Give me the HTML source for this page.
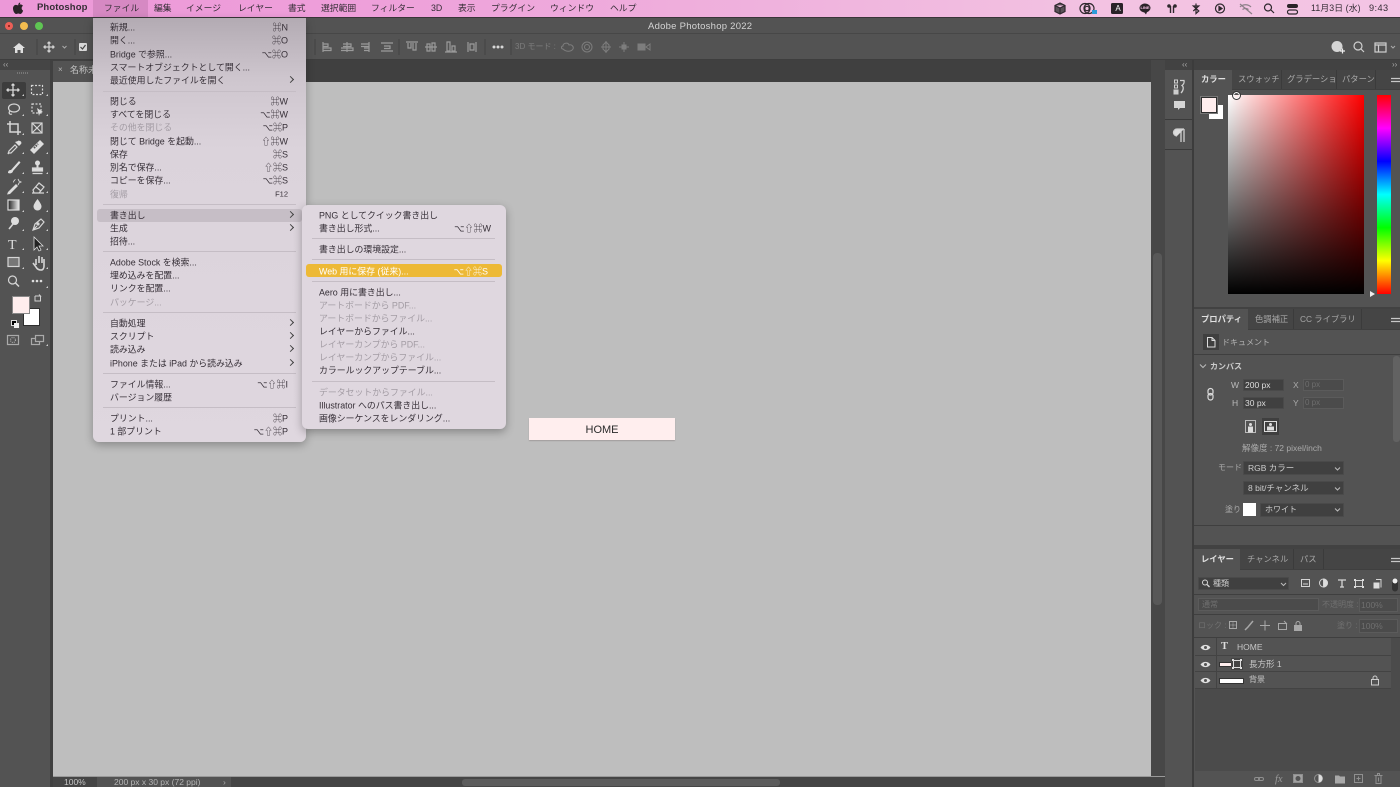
<!DOCTYPE html>
<html lang="ja"><head><meta charset="utf-8"><title>Adobe Photoshop 2022</title>
<style>
*{box-sizing:border-box}
html{margin:0;padding:0;width:1400px;height:787px;overflow:hidden;background:#535353}
body{margin:0;padding:0;width:1400px;height:787px;overflow:hidden;background:#535353;font-family:"Liberation Sans","Noto Sans CJK JP",sans-serif;position:relative;filter:blur(.3px)}
.a{position:absolute}
.t{position:absolute;white-space:nowrap;font-size:9px;line-height:12px;color:#c4c4c4}
.m{position:absolute;white-space:nowrap;font-size:8.800px;line-height:14px;color:#352e36;top:0}
.mb{position:absolute;white-space:nowrap;font-size:8.900px;line-height:12px;color:#362f37;transform:translateY(-5.500px)}
.d{color:#a39ca4}
.s{position:absolute;white-space:nowrap;font-size:9px;line-height:12px;color:#362f37;transform:translateY(-5.500px);text-align:right}
.k{right:18px}
.ar{position:absolute;left:195px;width:5px;height:5px;border-top:1px solid #444;border-right:1px solid #444;transform:translateY(-3px) rotate(45deg)}
.sep{position:absolute;height:1px;background:#c5bdc5}
.sel{position:absolute;background:#404040;border:1px solid #4a4a4a;border-radius:1px}
.dis{position:absolute;background:#4b4b4b;border:1px solid #5b5b5b}
.line{position:absolute;background:#3f3f3f;height:1px}
svg{position:absolute;overflow:visible}
</style></head><body>

<!-- menu bar -->
<div class="a" style="left:0;top:0;width:1400px;height:18px;background:linear-gradient(90deg,#ec98d8 0%,#ee9fda 25%,#efb2dd 55%,#f3c3e2 80%,#f3c4e4 100%);border-bottom:1px solid #3a3539"></div>
<div class="a" style="left:93px;top:0;width:55px;height:17px;background:#d689c3"></div>
<svg style="left:12px;top:2px" width="12" height="13" viewBox="0 0 12 13"><path d="M8.2 0.5C7.2.7 6.2 1.6 6.3 3c1.1 0 2-1.2 1.9-2.5zM6.2 3.4c-.7 0-1.3-.5-2.2-.5C2.4 2.9 1 4.200 1 6.500c0 2.500 1.700 5.500 3.200 5.500.8 0 1.200-.5 2.100-.5s1.200.5 2 .5c1.300 0 2.500-2.200 2.800-3.400-1.800-.8-2-3.800-.1-4.700-.6-1-1.700-1.500-2.600-1.500-.9 0-1.500.5-2.200.5z" fill="#2a2228"/></svg>
<span class="m" style="left:37px;top:1px;font-weight:700;font-size:9.500px;letter-spacing:.1px">Photoshop</span>
<span class="m" style="left:104px;top:1px">ファイル</span>
<span class="m" style="left:154px;top:1px">編集</span>
<span class="m" style="left:186px;top:1px">イメージ</span>
<span class="m" style="left:238px;top:1px">レイヤー</span>
<span class="m" style="left:288px;top:1px">書式</span>
<span class="m" style="left:321px;top:1px">選択範囲</span>
<span class="m" style="left:371px;top:1px">フィルター</span>
<span class="m" style="left:431px;top:1px">3D</span>
<span class="m" style="left:458px;top:1px">表示</span>
<span class="m" style="left:491px;top:1px">プラグイン</span>
<span class="m" style="left:550px;top:1px">ウィンドウ</span>
<span class="m" style="left:610px;top:1px">ヘルプ</span>
<span class="m" style="left:1311px;top:1px;letter-spacing:.1px">11月3日 (水)</span>
<span class="m" style="left:1369px;top:1px;letter-spacing:.4px;font-size:9.200px">9:43</span>
<svg style="left:1050px;top:0" width="300" height="18" fill="none" stroke="#2e282d" stroke-width="1.200">
<path d="M10 3l5 2.500v6l-5 2.500-5-2.500v-6zM5 5.500l5 2.500 5-2.500M10 8v6" fill="#5a5258"/>
<circle cx="35" cy="8.500" r="5"/><circle cx="39" cy="8.500" r="5"/><circle cx="37" cy="8.500" r="2.200"/>
<rect x="42" y="10" width="5" height="4" fill="#2c9ad8" stroke="none"/>
<rect x="61" y="3" width="12" height="11" rx="1.500" fill="#2a2228" stroke="none"/>
<ellipse cx="95" cy="8" rx="5.500" ry="4.500" fill="#2a2228" stroke="none"/><path d="M94 12l2 2.500 1-2.500" fill="#2a2228" stroke="none"/>
<circle cx="119" cy="6" r="1.800" fill="#2e282d" stroke="none"/><circle cx="125" cy="6" r="1.800" fill="#2e282d" stroke="none"/><path d="M120.500 6v7M123.500 6v7" stroke-width="1.400"/>
<path d="M146 3.500v10l2.800-2.500-5.500-5 5.500-.0-5.500 5" transform="translate(0 .0)"/>
<circle cx="170" cy="8.500" r="4.500"/><path d="M169 6.500l3 2-3 2z" fill="#2e282d"/>
<path d="M190 7c3-3 8-3 11 0M192.500 9.500c2-1.500 4-1.500 6 0M190 4l12 10" stroke="#8c7f88"/>
<circle cx="218" cy="7.500" r="3.500"/><path d="M221 10l3 3"/>
<rect x="237" y="4" width="11" height="4" rx="2" fill="#2a2228" stroke="none"/><rect x="237.500" y="10" width="10" height="4" rx="2"/>
</svg>
<span class="a" style="left:1113px;top:3px;font-size:8px;line-height:11px;color:#fff;width:10px;text-align:center">A</span>
<span class="a" style="left:1139px;top:5px;font-size:4px;line-height:6px;color:#f3c0e2;width:12px;text-align:center;font-weight:700">LINE</span>

<!-- title bar -->
<div class="a" style="left:0;top:18px;width:1400px;height:16px;background:#535353;border-bottom:1px solid #474747"></div>
<div class="a" style="left:5px;top:22px;width:8px;height:8px;border-radius:50%;background:#ec5f57"></div>
<div class="a" style="left:8px;top:25px;width:2px;height:2px;border-radius:50%;background:#7f1a14"></div>
<div class="a" style="left:20px;top:22px;width:8px;height:8px;border-radius:50%;background:#f4bd4f"></div>
<div class="a" style="left:35px;top:22px;width:8px;height:8px;border-radius:50%;background:#5fc553"></div>
<span class="t" style="left:648px;top:21px;font-size:9.500px;color:#d4d4d4;letter-spacing:.25px">Adobe Photoshop 2022</span>

<!-- options bar -->
<div class="a" style="left:0;top:34px;width:1400px;height:26px;background:#535353;border-bottom:1px solid #3e3e3e"></div>
<svg style="left:0;top:34px" width="700" height="26" fill="none" stroke="#d0d0d0" stroke-width="1">
<path d="M13 14l6-5 6 5h-2v5h-2.500v-3h-3v3H15v-5z" fill="#e0e0e0" stroke="none"/>
<path d="M37 5v16M75 5v16" stroke="#434343"/>
<path d="M49 8v10M44 13h10M47.500 9.500L49 8l1.500 1.500M47.500 16.500L49 18l1.500-1.500M45.500 11.500L44 13l1.500 1.500M52.500 11.500L54 13l-1.500 1.500" stroke-width="1.300"/>
<path d="M62.500 12l2 2 2-2" stroke="#aaa"/>
<rect x="79" y="9" width="8" height="8" rx="1" fill="#d8d8d8" stroke="none"/><path d="M80.500 13l2 2 3-4" stroke="#444" stroke-width="1.200"/>
<path d="M315 5v16M399 5v16M485 5v16M511 5v16" stroke="#434343"/>
<g stroke="#9a9a9a" stroke-width="1.200">
<path d="M323 8v10M323 10h5v2.500h-5M323 14h8v2.500h-8" />
<path d="M347 8v10M343 10h8v2.500h-8M341 14h12v2.500h-12"/>
<path d="M369 8v10M361 10h8v2.500h-8M364 14h5v2.500h-5"/>
<path d="M381 9h12M381 17h12M384 12h6v2.500h-6"/>
<path d="M406 8h12M408 9v5h3v-5M413 9v7h3v-7"/>
<path d="M425 13h12M427 10h3v7h-3zM432 9h3v8h-3z"/>
<path d="M445 18h12M447 8h3v9h-3zM452 12h3v5h-3z"/>
<path d="M468 8v10M476 8v10M470 10h4v6h-4z"/>
</g>
<g fill="#d8d8d8" stroke="none"><circle cx="494" cy="13" r="1.500"/><circle cx="498" cy="13" r="1.500"/><circle cx="502" cy="13" r="1.500"/></g>
<g stroke="#7d7d7d">
<path d="M563 15c-2 0-2-3 0-3 0-3 5-4 6-1 3-1 5 2 4 4-2 3-7 3-10 0z"/>
<circle cx="587" cy="13" r="5"/><circle cx="587" cy="13" r="2.500"/>
<path d="M606 8l3 3v4l-3 3-3-3v-4zM601 13h10M606 7v12"/>
<path d="M624 8v10M619 13h10"/><rect x="622" y="11" width="4" height="4" fill="#7d7d7d"/>
<rect x="638" y="10" width="7" height="6" fill="#7d7d7d"/><path d="M646 13l4-3v6z"/>
</g>
</svg>
<span class="t" style="left:515px;top:41px;font-size:8px;color:#7d7d7d">3D モード :</span>
<svg style="left:1325px;top:34px" width="75" height="26" fill="none" stroke="#cfcfcf" stroke-width="1.200">
<circle cx="12" cy="12.500" r="5.500" fill="#d5d5d5" stroke="none"/><path d="M15 17h5M17.500 14.500v5" stroke="#eee"/>
<circle cx="33" cy="12" r="4"/><path d="M36 15l3 3"/>
<rect x="50" y="9" width="11" height="9"/><path d="M50 11h11M53.500 11v7" />
<path d="M66 12l2 2 2-2" stroke="#aaa" stroke-width="1"/>
</svg>

<!-- tab bar + canvas -->
<div class="a" style="left:53px;top:60px;width:1098px;height:22px;background:#404040"></div>
<div class="a" style="left:53px;top:61px;width:42px;height:21px;background:#535353"></div>
<span class="t" style="left:58px;top:64px;color:#b5b5b5;font-size:8px">×</span>
<span class="t" style="left:70px;top:64px">名称未設定</span>
<div class="a" style="left:53px;top:82px;width:1098px;height:694px;background:#bebebe"></div>
<div class="a" style="left:529px;top:418px;width:146px;height:22px;background:#ffeeee;box-shadow:0 1px 1px #a19c9c"></div>
<span class="a" style="left:529px;top:422px;width:146px;text-align:center;font-size:11px;line-height:16px;color:#2a2a2a">HOME</span>

<!-- left toolbar -->
<div class="a" style="left:0;top:60px;width:51px;height:727px;background:#535353"></div>
<div class="a" style="left:50px;top:60px;width:3px;height:727px;background:#404040"></div>
<div class="a" style="left:0;top:60px;width:50px;height:10px;background:#454545"></div>
<span class="t" style="left:3px;top:59px;font-size:8px;color:#aaa">‹‹</span>
<div class="a" style="left:2px;top:82px;width:24px;height:17px;background:#3d3d3d;border-radius:2px"></div>
<svg style="left:0;top:60px" width="50" height="300" fill="none" stroke="#d6d6d6" stroke-width="1.200">
<path d="M17 13h11" stroke="#777" stroke-dasharray="1 1" stroke-width="2"/>
<!-- tick marks -->
<path d="M22 36h2v-2zM46 36h2v-2zM22 56h2v-2zM46 56h2v-2zM22 75h2v-2zM22 94h2v-2zM46 94h2v-2zM22 114h2v-2zM46 114h2v-2zM22 133h2v-2zM46 133h2v-2zM22 152h2v-2zM46 152h2v-2zM22 171h2v-2zM46 171h2v-2zM22 190h2v-2zM46 190h2v-2zM22 209h2v-2zM46 209h2v-2zM46 228h2v-2zM46 286h2v-2z" fill="#cfcfcf" stroke="none"/>
<!-- row 1 y=30 -->
<g transform="translate(13 30)"><path d="M0-6V6M-6 0H6M-1.500-4.500L0-6l1.500 1.500M-1.500 4.500L0 6l1.500-1.500M-4.500-1.500L-6 0l1.500 1.500M4.500-1.500L6 0 4.500 1.500" stroke-width="1.300"/></g>
<g transform="translate(37 30)"><rect x="-5.500" y="-4.500" width="11" height="9" stroke-dasharray="2 1.500"/></g>
<!-- row 2 y=49 -->
<g transform="translate(14 49)"><ellipse cx="0" cy="-1" rx="5.500" ry="4"/><path d="M-4 2c-2 2 0 4 2 3"/></g>
<g transform="translate(37 49)"><rect x="-5" y="-5" width="9" height="9" stroke-dasharray="2 1.500"/><path d="M0-1l6 4-3 1-1 3z" fill="#ddd" stroke="none"/></g>
<!-- row 3 y=68 -->
<g transform="translate(13 68)"><path d="M-3-7V4H8M-6-4H5V7" stroke-width="1.500"/></g>
<g transform="translate(37 68)"><rect x="-5" y="-5" width="10" height="10"/><path d="M-5-5L5 5M5-5L-5 5"/></g>
<!-- row 4 y=87 -->
<g transform="translate(14 87)"><path d="M-5 6l-1 1 1-3 6-6 2 2-6 6z" stroke-width="1.200"/><path d="M1-5l4 4 2-2c1-1 0-3-1-3s-1-1-2 0z" fill="#ddd" stroke="none"/></g>
<g transform="translate(37 87)"><path d="M-7 3L3-7l4 4L-3 7z" fill="#ddd" stroke="none"/><path d="M-3 1l4-4" stroke="#535353" stroke-width="2" stroke-dasharray="1.500 1"/></g>
<!-- row 5 y=107 -->
<g transform="translate(14 107)"><path d="M-6 6c0-2 1-3 3-3L5-6l1.500 1.500L-1 4c0 2-3 3-5 2z" fill="#ddd" stroke="none"/></g>
<g transform="translate(37.500 107)"><circle cx="0" cy="-4" r="2.500" fill="#ddd" stroke="none"/><path d="M-1-2h2v3h-2z" fill="#ddd" stroke="none"/><path d="M-5 1h10v3H-5zM-5 6.500H5" fill="#ddd"/></g>
<!-- row 6 y=126 -->
<g transform="translate(14 126)"><path d="M-6 6l8-8 2 2-8 8-3 .5zM2-7c-2 .5-3 2-3 4M1-5h3" fill="#ddd" stroke="none"/><path d="M4-7l1 2 2 1-2 1-1 2" stroke-width=".9"/></g>
<g transform="translate(38 126)"><path d="M-5 4l6-7 5 4-5 6h-5zM-2 1l5 4M-6 7H6"/></g>
<!-- row 7 y=145 -->
<defs><linearGradient id="g1"><stop offset="0" stop-color="#222"/><stop offset="1" stop-color="#eee"/></linearGradient></defs>
<rect x="8" y="140" width="11" height="10" fill="url(#g1)" stroke="#ddd"/>
<path d="M37.500 139c3 4 4 6 4 7.500a4 4 0 0 1-8 0c0-1.500 1-3.500 4-7.500z" fill="#ddd" stroke="none"/>
<!-- row 8 y=164 -->
<circle cx="15" cy="161" r="4" fill="#ddd" stroke="none"/><path d="M13 164l-4 5" stroke-width="1.600"/>
<path d="M33 170l2-6 6-5 3 3-5 6zM33 170l4-4"/><circle cx="38" cy="164" r="1" fill="#ddd"/>
<!-- row 9 y=183 -->
<text x="8" y="189" font-family="Liberation Serif" font-size="14" fill="#dcdcdc" stroke="none">T</text>
<path d="M34 177l0 13 3-3 2 4 2-1-2-4h4z" fill="#222" stroke="#ddd" stroke-width=".8"/>
<!-- row 10 y=202 -->
<rect x="8" y="197.500" width="11" height="9" fill="#777"/>
<path d="M33 203l3 4c1 2 3 3 5 3s3-2 3-4v-7M36 199v6M39 196v7M42 197v6" stroke-width="1.600"/>
<!-- row 11 y=221 -->
<circle cx="12.500" cy="220" r="4"/><path d="M15.500 223l3.500 3.500" stroke-width="1.500"/>
<g fill="#ddd" stroke="none"><circle cx="33" cy="221" r="1.300"/><circle cx="37" cy="221" r="1.300"/><circle cx="41" cy="221" r="1.300"/></g>
<!-- swap -->
<path d="M35 236h5.500l-1.500-1.500M40.500 236v5.500M35 236v5h5.500" stroke="#d0d0d0" stroke-width="1" fill="none" transform="translate(0 0)"/>
<rect x="7.500" y="275.500" width="11" height="9" stroke="#aaa"/><circle cx="13" cy="280" r="2.500" stroke="#aaa" stroke-dasharray="1 1"/>
<rect x="31.500" y="278.500" width="8" height="6" stroke="#aaa"/><rect x="35.500" y="275.500" width="8" height="6" fill="#535353" stroke="#aaa"/>
</svg>
<div class="a" style="left:23px;top:308px;width:17px;height:18px;background:#fff;border:1px solid #2e2e2e"></div>
<div class="a" style="left:12px;top:296px;width:18px;height:18px;background:#ffeeee;border:1px solid #888"></div>
<div class="a" style="left:11px;top:320px;width:6px;height:6px;background:#000;border:1px solid #ddd"></div>
<div class="a" style="left:14px;top:323px;width:5px;height:5px;background:#eee"></div>

<!-- vertical scroll area -->
<div class="a" style="left:1151px;top:60px;width:14px;height:727px;background:#474747"></div>
<div class="a" style="left:1153px;top:253px;width:9px;height:352px;background:#585858;border-radius:4px"></div>
<!-- status bar -->
<div class="a" style="left:53px;top:776px;width:1112px;height:11px;background:#454545;border-top:1px solid #999"></div>
<div class="a" style="left:97px;top:777px;width:134px;height:10px;background:#535353"></div>
<div class="a" style="left:462px;top:779px;width:318px;height:7px;background:#5c5c5c;border-radius:3px"></div>
<span class="t" style="left:64px;top:777px;font-size:8.500px;line-height:11px">100%</span>
<span class="t" style="left:114px;top:777px;font-size:8.500px;line-height:11px;color:#b5b5b5">200 px x 30 px (72 ppi)</span>
<span class="t" style="left:223px;top:777px;font-size:8.500px;line-height:11px;color:#aaa">›</span>

<!-- dock -->
<div class="a" style="left:1165px;top:60px;width:235px;height:727px;background:#424242"></div>
<div class="a" style="left:1165px;top:70px;width:27px;height:717px;background:#535353"></div>
<div class="line" style="left:1165px;top:119px;width:27px;background:#3a3a3a"></div>
<div class="line" style="left:1165px;top:149px;width:27px;background:#3a3a3a"></div>
<div class="a" style="left:1192px;top:60px;width:2px;height:727px;background:#3c3c3c"></div>
<span class="t" style="left:1182px;top:59px;font-size:8px;color:#aaa">‹‹</span>
<span class="t" style="left:1392px;top:59px;font-size:8px;color:#aaa">››</span>
<svg style="left:1165px;top:70px" width="28" height="80" fill="none" stroke="#cfcfcf">
<rect x="9.500" y="10" width="3" height="3"/><rect x="9.500" y="15" width="3" height="3"/><rect x="9" y="20" width="4" height="4" fill="#ccc"/>
<path d="M15 10.500h4c.5 2-.5 4-2 5 2 1.500 1.500 5-1 7.500" stroke-width="1.300"/>
<path d="M9 31h11v7h-5l-2 2v-2H9z" fill="#d5d5d5" stroke="none"/>
<path d="M12 66a3.500 3.500 0 0 1 0-7h7M16 59v13M19 59v13" fill="#ddd" stroke-width="1.300" transform="translate(0 0)"/>
</svg>

<!-- color panel -->
<div class="a" style="left:1194px;top:70px;width:206px;height:237px;background:#535353"></div>
<div class="a" style="left:1232px;top:70px;width:168px;height:19px;background:#454545"></div>
<div class="line" style="left:1232px;top:89px;width:168px"></div>
<span class="t" style="left:1201px;top:73px;color:#e0e0e0;font-weight:700;font-size:8.300px">カラー</span>
<span class="t" style="left:1238px;top:73px;color:#a8a8a8;font-size:8.300px">スウォッチ</span>
<span class="a" style="left:1287px;top:73px;width:48px;overflow:hidden;white-space:nowrap;font-size:8.300px;line-height:12px;color:#a8a8a8">グラデーション</span>
<span class="t" style="left:1342px;top:73px;color:#a8a8a8;font-size:8.300px">パターン</span>
<div class="a" style="left:1281px;top:70px;width:1px;height:19px;background:#3b3b3b"></div>
<div class="a" style="left:1336px;top:70px;width:1px;height:19px;background:#3b3b3b"></div>
<div class="a" style="left:1375px;top:70px;width:1px;height:19px;background:#3b3b3b"></div>
<div class="a" style="left:1209px;top:105px;width:14px;height:14px;background:#fff"></div>
<div class="a" style="left:1201px;top:97px;width:16px;height:16px;background:#ffeeee;border:1px solid #2e2e2e;outline:1px solid #777"></div>
<div class="a" style="left:1228px;top:95px;width:136px;height:199px;background:linear-gradient(to top,#000,rgba(0,0,0,0)),linear-gradient(to right,#fff,#f00)"></div>
<div class="a" style="left:1232px;top:91px;width:9px;height:9px;border-radius:50%;border:1px solid #333;box-shadow:inset 0 0 0 1px #fff"></div>
<div class="a" style="left:1377px;top:95px;width:14px;height:199px;background:linear-gradient(to bottom,#f00 0%,#f0f 16.700%,#00f 33.300%,#0ff 50%,#0f0 66.700%,#ff0 83.300%,#f00 100%)"></div>
<div class="a" style="left:1370px;top:291px;width:0;height:0;border-left:5px solid #eee;border-top:3px solid transparent;border-bottom:3px solid transparent"></div>
<svg style="left:1390px;top:75px" width="10" height="10" stroke="#c8c8c8" stroke-width="1.200"><path d="M1 3.500h9M1 6.500h9"/></svg>

<!-- properties panel -->
<div class="a" style="left:1194px;top:309px;width:206px;height:236px;background:#535353"></div>
<div class="a" style="left:1248px;top:309px;width:152px;height:20px;background:#454545"></div>
<div class="line" style="left:1248px;top:329px;width:152px"></div>
<div class="a" style="left:1293px;top:309px;width:1px;height:20px;background:#3b3b3b"></div>
<div class="a" style="left:1361px;top:309px;width:1px;height:20px;background:#3b3b3b"></div>
<span class="t" style="left:1201px;top:313px;color:#e0e0e0;font-weight:700;font-size:8.300px">プロパティ</span>
<span class="t" style="left:1255px;top:313px;color:#a8a8a8;font-size:8.300px">色調補正</span>
<span class="t" style="left:1300px;top:313px;color:#a8a8a8;font-size:8.300px">CC ライブラリ</span>
<svg style="left:1390px;top:315px" width="10" height="10" stroke="#c8c8c8" stroke-width="1.200"><path d="M1 3.500h9M1 6.500h9"/></svg>
<div class="a" style="left:1203px;top:334px;width:16px;height:16px;background:#3f3f3f"></div>
<svg style="left:1203px;top:334px" width="16" height="16" fill="none" stroke="#ddd"><path d="M4.500 3.500h4.500l3 3v6.500h-7.500zM9 3.500v3h3"/></svg>
<span class="t" style="left:1222px;top:337px;font-size:8px;color:#b5b5b5">ドキュメント</span>
<div class="line" style="left:1194px;top:354px;width:206px"></div>
<svg style="left:1199px;top:363px" width="9" height="7" fill="none" stroke="#bbb"><path d="M1 1.500l3 3 3-3"/></svg>
<span class="t" style="left:1210px;top:361px;font-size:8px;font-weight:700;color:#ccc">カンバス</span>
<div class="a" style="left:1393px;top:356px;width:7px;height:86px;background:#626262;border-radius:3px"></div>
<span class="t" style="left:1231px;top:379px;font-size:8.500px;color:#bbb">W</span>
<div class="sel" style="left:1243px;top:379px;width:41px;height:12px"></div>
<span class="t" style="left:1245px;top:379px;font-size:8.500px;color:#ddd">200 px</span>
<span class="t" style="left:1293px;top:379px;font-size:8.500px;color:#aaa">X</span>
<div class="dis" style="left:1303px;top:379px;width:41px;height:12px"></div>
<span class="t" style="left:1305px;top:379px;font-size:8px;color:#6e6e6e">0 px</span>
<span class="t" style="left:1232px;top:397px;font-size:8.500px;color:#bbb">H</span>
<div class="sel" style="left:1243px;top:397px;width:41px;height:12px"></div>
<span class="t" style="left:1245px;top:397px;font-size:8.500px;color:#ddd">30 px</span>
<span class="t" style="left:1293px;top:397px;font-size:8.500px;color:#aaa">Y</span>
<div class="dis" style="left:1303px;top:397px;width:41px;height:12px"></div>
<span class="t" style="left:1305px;top:397px;font-size:8px;color:#6e6e6e">0 px</span>
<svg style="left:1207px;top:388px" width="8" height="13" fill="none" stroke="#ddd" stroke-width="1.200"><rect x="1" y=".5" width="5" height="6.500" rx="2.500"/><rect x="1" y="5.500" width="5" height="6.500" rx="2.500"/></svg>
<div class="a" style="left:1262px;top:418px;width:17px;height:17px;background:#3f3f3f"></div>
<svg style="left:1245px;top:420px" width="35" height="14"><rect x=".5" y=".5" width="10" height="12" fill="#535353" stroke="#bbb"/><circle cx="5.500" cy="4.500" r="1.500" fill="#ddd"/><rect x="3" y="6.500" width="5" height="6" fill="#ddd"/><rect x="19.500" y="1.500" width="12" height="10" fill="#3f3f3f" stroke="#ddd"/><circle cx="25.500" cy="4.500" r="1.500" fill="#ddd"/><rect x="22" y="6.500" width="7" height="4" fill="#ddd"/></svg>
<span class="t" style="left:1242px;top:442px;font-size:8.500px;color:#aaa">解像度 : 72 pixel/inch</span>
<span class="t" style="left:1218px;top:462px;font-size:8px;color:#aaa">モード</span>
<div class="sel" style="left:1243px;top:461px;width:101px;height:14px"></div>
<span class="t" style="left:1248px;top:462px;font-size:8.500px;color:#ccc">RGB カラー</span>
<div class="sel" style="left:1243px;top:481px;width:101px;height:14px"></div>
<span class="t" style="left:1248px;top:482px;font-size:8.500px;color:#ccc">8 bit/チャンネル</span>
<span class="t" style="left:1225px;top:504px;font-size:8px;color:#aaa">塗り</span>
<div class="a" style="left:1243px;top:503px;width:13px;height:13px;background:#fff"></div>
<div class="sel" style="left:1260px;top:503px;width:84px;height:14px"></div>
<span class="t" style="left:1265px;top:504px;font-size:8px;color:#ccc">ホワイト</span>
<svg style="left:1334px;top:465px" width="8" height="50" fill="none" stroke="#bbb"><path d="M1 2.500l2.500 2.500 2.500-2.500M1 22.500l2.500 2.500 2.500-2.500M1 43.500l2.500 2.500 2.500-2.500"/></svg>
<div class="line" style="left:1194px;top:525px;width:206px"></div>

<!-- layers panel -->
<div class="a" style="left:1194px;top:549px;width:206px;height:238px;background:#535353"></div>
<div class="a" style="left:1240px;top:549px;width:160px;height:20px;background:#454545"></div>
<div class="line" style="left:1240px;top:569px;width:160px"></div>
<div class="a" style="left:1293px;top:549px;width:1px;height:20px;background:#3b3b3b"></div>
<div class="a" style="left:1323px;top:549px;width:1px;height:20px;background:#3b3b3b"></div>
<span class="t" style="left:1201px;top:553px;color:#e0e0e0;font-weight:700;font-size:8.300px">レイヤー</span>
<span class="t" style="left:1247px;top:553px;color:#a8a8a8;font-size:8.300px">チャンネル</span>
<span class="t" style="left:1300px;top:553px;color:#a8a8a8;font-size:8.300px">パス</span>
<svg style="left:1390px;top:555px" width="10" height="10" stroke="#c8c8c8" stroke-width="1.200"><path d="M1 3.500h9M1 6.500h9"/></svg>
<div class="sel" style="left:1198px;top:577px;width:91px;height:13px"></div>
<span class="t" style="left:1213px;top:578px;font-size:8px;color:#ccc">種類</span>
<svg style="left:1200px;top:578px" width="195" height="14" fill="none" stroke="#d5d5d5">
<circle cx="5" cy="4.500" r="2.500"/><path d="M7 6.500l2.500 2.500" stroke-width="1.300"/>
<path d="M81 5l2.500 2.500 2.500-2.500" stroke="#bbb"/>
<rect x="101.500" y="1.500" width="8" height="7"/><path d="M103 6h5"/>
<circle cx="123.500" cy="5" r="4" /><path d="M123.500 1a4 4 0 0 1 0 8z" fill="#ddd"/>
<path d="M138 2h8M142 2v7M140 9h4" stroke-width="1.300"/>
<rect x="155.500" y="2.500" width="7" height="6"/><path d="M154 1h2v2h-2zM162 1h2v2h-2zM154 8h2v2h-2zM162 8h2v2h-2z" fill="#ddd" stroke="none"/>
<rect x="173.500" y="4.500" width="6" height="6" fill="#ddd" stroke="none"/><path d="M176 1.500h5v8"/>
<rect x="192.500" y="1" width="5" height="12" rx="2.500" stroke="#333" fill="#333"/><circle cx="195" cy="3" r="2.500" fill="#eee" stroke="none"/>
</svg>
<div class="line" style="left:1194px;top:594px;width:206px"></div>
<div class="dis" style="left:1198px;top:598px;width:121px;height:13px"></div>
<span class="t" style="left:1202px;top:599px;font-size:8px;color:#707070">通常</span>
<span class="t" style="left:1322px;top:599px;font-size:8px;color:#707070">不透明度 :</span>
<div class="dis" style="left:1359px;top:598px;width:39px;height:14px"></div>
<span class="t" style="left:1361px;top:599px;font-size:8.500px;color:#707070">100%</span>
<div class="line" style="left:1194px;top:614px;width:206px"></div>
<span class="t" style="left:1198px;top:620px;font-size:8px;color:#707070">ロック :</span>
<svg style="left:1228px;top:619px" width="80" height="14" fill="none" stroke="#a8a8a8">
<rect x="1.500" y="2.500" width="7" height="7"/><path d="M1.500 6h7M5 2.500v7" stroke-dasharray="1 1"/>
<path d="M17 11l3-3 5-6" stroke-width="1.500"/>
<path d="M37 1.500v10M32 6.500h10"/>
<rect x="50.500" y="4.500" width="8" height="6"/><path d="M56 2l3 3"/>
<rect x="66.500" y="6.500" width="7" height="5" fill="#a8a8a8"/><path d="M68 6.500v-2a2 2 0 0 1 4 0v2"/>
</svg>
<span class="t" style="left:1337px;top:620px;font-size:8px;color:#707070">塗り :</span>
<div class="dis" style="left:1359px;top:619px;width:39px;height:14px"></div>
<span class="t" style="left:1361px;top:620px;font-size:8.500px;color:#707070">100%</span>
<div class="line" style="left:1194px;top:637px;width:206px"></div>
<!-- layer rows -->
<div class="a" style="left:1195px;top:638px;width:196px;height:49px;background:#535353"></div>
<div class="line" style="left:1195px;top:655px;width:196px;background:#434343"></div>
<div class="line" style="left:1195px;top:671px;width:196px;background:#434343"></div>
<div class="line" style="left:1195px;top:688px;width:196px;background:#434343"></div>
<div class="a" style="left:1216px;top:638px;width:1px;height:50px;background:#434343"></div>
<div class="a" style="left:1391px;top:638px;width:9px;height:133px;background:#4b4b4b"></div>
<div class="a" style="left:1195px;top:689px;width:196px;height:82px;background:#4b4b4b"></div>
<svg style="left:1200px;top:642px" width="12" height="46" fill="#e0e0e0">
<path d="M.5 5.500C3 2 8 2 10.500 5.500 8 9 3 9 .5 5.500z"/><circle cx="5.500" cy="5.500" r="1.500" fill="#535353"/>
<path d="M.5 22.500C3 19 8 19 10.500 22.500 8 26 3 26 .5 22.500z"/><circle cx="5.500" cy="22.500" r="1.500" fill="#535353"/>
<path d="M.5 38.500C3 35 8 35 10.500 38.500 8 42 3 42 .5 38.500z"/><circle cx="5.500" cy="38.500" r="1.500" fill="#535353"/>
</svg>
<span class="a" style="left:1221px;top:640px;font-family:'Liberation Serif',serif;font-weight:700;font-size:10.500px;line-height:13px;color:#ddd">T</span>
<span class="t" style="left:1237px;top:641px;font-size:8.500px;color:#c8c8c8">HOME</span>
<div class="a" style="left:1220px;top:663px;width:12px;height:3px;background:#ffeeee;box-shadow:0 0 0 1px #333"></div>
<div class="a" style="left:1231px;top:658px;width:12px;height:12px;background:#444"></div>
<svg style="left:1231px;top:658px" width="12" height="12" fill="none" stroke="#ddd"><rect x="2.500" y="2.500" width="7" height="7"/><path d="M1 1h2v2H1zM9 1h2v2H9zM1 9h2v2H1zM9 9h2v2H9z" fill="#ddd" stroke="none"/></svg>
<span class="t" style="left:1249px;top:658px;font-size:8.500px;color:#c8c8c8">長方形 1</span>
<div class="a" style="left:1220px;top:679px;width:23px;height:4px;background:#fff;box-shadow:0 0 0 1px #333"></div>
<span class="t" style="left:1249px;top:674px;font-size:8px;color:#c8c8c8">背景</span>
<svg style="left:1370px;top:675px" width="10" height="11" fill="none" stroke="#ccc"><rect x="1.500" y="4.500" width="7" height="5.500"/><path d="M3 4.500V3a2 2 0 0 1 4 0v1.500"/></svg>
<!-- layer footer -->
<div class="a" style="left:1194px;top:771px;width:206px;height:16px;background:#535353"></div>
<svg style="left:1250px;top:772px" width="140" height="14" fill="none" stroke="#8f8f8f">
<rect x="4.500" y="5.500" width="5" height="3" rx="1.500"/><rect x="8.500" y="5.500" width="5" height="3" rx="1.500"/>
<rect x="43.500" y="2.500" width="9" height="8" fill="#a0a0a0"/><circle cx="48" cy="6.500" r="2.500" fill="#535353" stroke="none"/>
<circle cx="68.500" cy="6.500" r="4" /><path d="M68.500 2.500a4 4 0 0 1 0 8z" fill="#ddd" stroke="none"/>
<path d="M85 3.500h4l1 1h5v7h-10z" fill="#a8a8a8" stroke="none"/>
<rect x="104.500" y="2.500" width="8" height="8"/><path d="M108.500 4.500v4M106.500 6.500h4"/>
<path d="M124.500 3.500h8M126 3.500v8h5v-8M127.500 3.500v-2h2v2M128.500 5.500v4"/>
</svg>
<span class="a" style="left:1275px;top:773px;font-family:'Liberation Serif',serif;font-style:italic;font-size:10.500px;line-height:13px;color:#999">fx</span>

<!-- file menu -->
<div class="a" style="left:93px;top:18px;width:213px;height:424px;border-radius:0 0 6px 6px;background:linear-gradient(180deg,#b3abb3 0,#cec6ce 60px,#dbd3db 130px,#dfd7df 100%);box-shadow:0 3px 9px rgba(0,0,0,.28)"></div>
<div class="a" style="left:97px;top:209px;width:205px;height:13px;border-radius:3px;background:#c6bec6"></div>
<div class="a" style="left:93px;top:0;width:213px;height:0">
<span class="mb" style="left:17px;top:27px">新規...</span><span class="s k" style="top:27px">⌘N</span>
<span class="mb" style="left:17px;top:40px">開く...</span><span class="s k" style="top:40px">⌘O</span>
<span class="mb" style="left:17px;top:53.500px">Bridge で参照...</span><span class="s k" style="top:53.500px">⌥⌘O</span>
<span class="mb" style="left:17px;top:66.500px">スマートオブジェクトとして開く...</span>
<span class="mb" style="left:17px;top:79.500px">最近使用したファイルを開く</span><i class="ar" style="top:80px"></i>
<i class="sep" style="left:10px;top:91px;width:193px"></i>
<span class="mb" style="left:17px;top:101px">閉じる</span><span class="s k" style="top:101px">⌘W</span>
<span class="mb" style="left:17px;top:114px">すべてを閉じる</span><span class="s k" style="top:114px">⌥⌘W</span>
<span class="mb d" style="left:17px;top:127px">その他を閉じる</span><span class="s k d" style="top:127px">⌥⌘P</span>
<span class="mb" style="left:17px;top:140.500px">閉じて Bridge を起動...</span><span class="s k" style="top:140.500px">⇧⌘W</span>
<span class="mb" style="left:17px;top:153.500px">保存</span><span class="s k" style="top:153.500px">⌘S</span>
<span class="mb" style="left:17px;top:167px">別名で保存...</span><span class="s k" style="top:167px">⇧⌘S</span>
<span class="mb" style="left:17px;top:180px">コピーを保存...</span><span class="s k" style="top:180px">⌥⌘S</span>
<span class="mb d" style="left:17px;top:193.500px">復帰</span><span class="s k d" style="top:193.500px;font-size:7.500px">F12</span>
<i class="sep" style="left:10px;top:204px;width:193px"></i>
<span class="mb" style="left:17px;top:214.500px">書き出し</span><i class="ar" style="top:215px"></i>
<span class="mb" style="left:17px;top:228px">生成</span><i class="ar" style="top:228px"></i>
<span class="mb" style="left:17px;top:241px">招待...</span>
<i class="sep" style="left:10px;top:251px;width:193px"></i>
<span class="mb" style="left:17px;top:262px">Adobe Stock を検索...</span>
<span class="mb" style="left:17px;top:275px">埋め込みを配置...</span>
<span class="mb" style="left:17px;top:288px">リンクを配置...</span>
<span class="mb d" style="left:17px;top:301.500px">パッケージ...</span>
<i class="sep" style="left:10px;top:312px;width:193px"></i>
<span class="mb" style="left:17px;top:323px">自動処理</span><i class="ar" style="top:323px"></i>
<span class="mb" style="left:17px;top:336px">スクリプト</span><i class="ar" style="top:336px"></i>
<span class="mb" style="left:17px;top:349px">読み込み</span><i class="ar" style="top:349px"></i>
<span class="mb" style="left:17px;top:362.500px">iPhone または iPad から読み込み</span><i class="ar" style="top:363px"></i>
<i class="sep" style="left:10px;top:373px;width:193px"></i>
<span class="mb" style="left:17px;top:383.500px">ファイル情報...</span><span class="s k" style="top:383.500px">⌥⇧⌘I</span>
<span class="mb" style="left:17px;top:396.500px">バージョン履歴</span>
<i class="sep" style="left:10px;top:407px;width:193px"></i>
<span class="mb" style="left:17px;top:417.500px">プリント...</span><span class="s k" style="top:417.500px">⌘P</span>
<span class="mb" style="left:17px;top:430.500px">1 部プリント</span><span class="s k" style="top:430.500px">⌥⇧⌘P</span>
</div>

<!-- export submenu -->
<div class="a" style="left:302px;top:205px;width:204px;height:224px;border-radius:6px;background:#dfd7df;box-shadow:0 3px 9px rgba(0,0,0,.3)"></div>
<div class="a" style="left:306px;top:264px;width:196px;height:13px;border-radius:3px;background:#edb936"></div>
<div class="a" style="left:302px;top:0;width:204px;height:0">
<span class="mb" style="left:17px;top:214.500px">PNG としてクイック書き出し</span>
<span class="mb" style="left:17px;top:227.500px">書き出し形式...</span><span class="s" style="right:15px;top:227.500px">⌥⇧⌘W</span>
<i class="sep" style="left:10px;top:238px;width:183px"></i>
<span class="mb" style="left:17px;top:248.500px">書き出しの環境設定...</span>
<i class="sep" style="left:10px;top:259px;width:183px"></i>
<span class="mb" style="left:17px;top:270.500px;color:#fff">Web 用に保存 (従来)...</span><span class="s" style="right:18px;top:270.500px;color:#fff">⌥⇧⌘S</span>
<i class="sep" style="left:10px;top:281px;width:183px"></i>
<span class="mb" style="left:17px;top:291.500px">Aero 用に書き出し...</span>
<span class="mb d" style="left:17px;top:304.500px">アートボードから PDF...</span>
<span class="mb d" style="left:17px;top:317.500px">アートボードからファイル...</span>
<span class="mb" style="left:17px;top:330.500px">レイヤーからファイル...</span>
<span class="mb d" style="left:17px;top:344px">レイヤーカンプから PDF...</span>
<span class="mb d" style="left:17px;top:357px">レイヤーカンプからファイル...</span>
<span class="mb" style="left:17px;top:370px">カラールックアップテーブル...</span>
<i class="sep" style="left:10px;top:381px;width:183px"></i>
<span class="mb d" style="left:17px;top:391.500px">データセットからファイル...</span>
<span class="mb" style="left:17px;top:404.500px">Illustrator へのパス書き出し...</span>
<span class="mb" style="left:17px;top:418px">画像シーケンスをレンダリング...</span>
</div>
</body></html>
